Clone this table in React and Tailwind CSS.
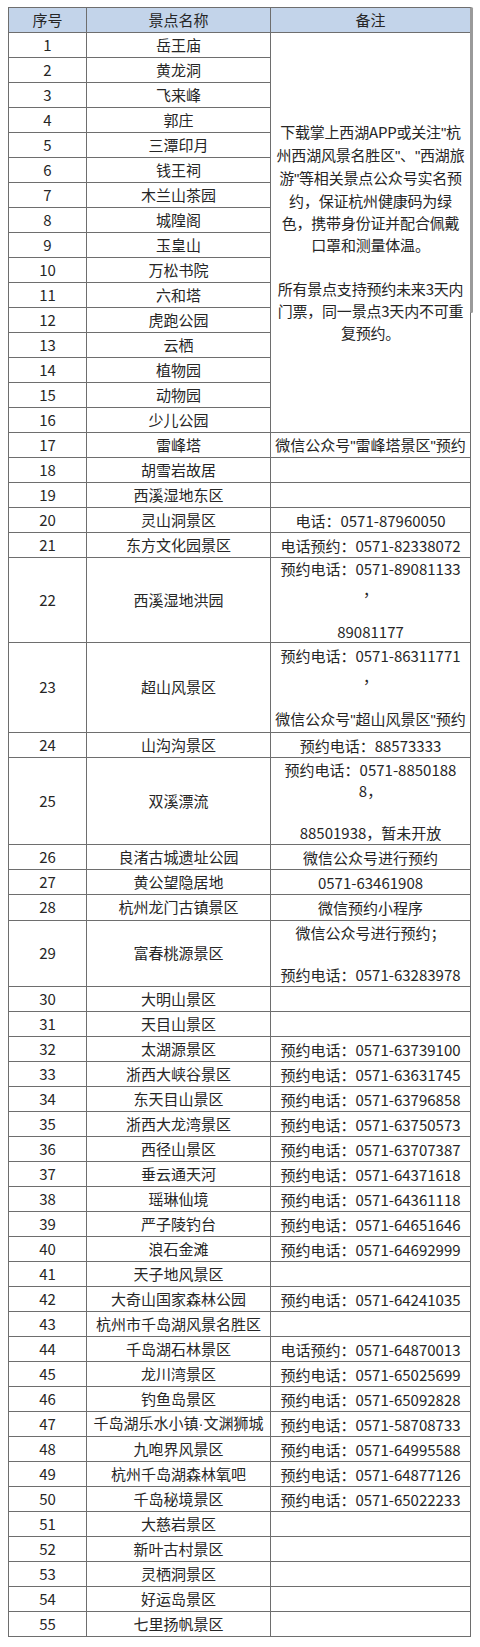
import React from 'react';

const dot = <span style={{ fontFamily: '"Liberation Sans", sans-serif' }}>·</span>;

const spots = [
  '岳王庙', '黄龙洞', '飞来峰', '郭庄', '三潭印月', '钱王祠', '木兰山茶园', '城隍阁',
  '玉皇山', '万松书院', '六和塔', '虎跑公园', '云栖', '植物园', '动物园', '少儿公园',
  '雷峰塔', '胡雪岩故居', '西溪湿地东区', '灵山洞景区', '东方文化园景区', '西溪湿地洪园',
  '超山风景区', '山沟沟景区', '双溪漂流', '良渚古城遗址公园', '黄公望隐居地', '杭州龙门古镇景区',
  '富春桃源景区', '大明山景区', '天目山景区', '太湖源景区', '浙西大峡谷景区', '东天目山景区',
  '浙西大龙湾景区', '西径山景区', '垂云通天河', '瑶琳仙境', '严子陵钓台', '浪石金滩',
  '天子地风景区', '大奇山国家森林公园', '杭州市千岛湖风景名胜区', '千岛湖石林景区', '龙川湾景区',
  '钓鱼岛景区', <>千岛湖乐水小镇{dot}文渊狮城</>, '九咆界风景区', '杭州千岛湖森林氧吧', '千岛秘境景区',
  '大慈岩景区', '新叶古村景区', '灵栖洞景区', '好运岛景区', '七里扬帆景区',
];

const q = <span style={{ fontFamily: '"Liberation Sans", sans-serif' }}>"</span>;

// notes from row 17 on; row heights only where a row is taller than 25px
const notes = {
  17: [<>微信公众号{q}雷峰塔景区{q}预约</>],
  20: ['电话：0571-87960050'],
  21: ['电话预约：0571-82338072'],
  22: ['预约电话：0571-89081133', '，', '', '89081177'],
  23: ['预约电话：0571-86311771', '，', '', <>微信公众号{q}超山风景区{q}预约</>],
  24: ['预约电话：88573333'],
  25: ['预约电话：0571-8850188', '8，', '', '88501938，暂未开放'],
  26: ['微信公众号进行预约'],
  27: ['0571-63461908'],
  28: ['微信预约小程序'],
  29: ['微信公众号进行预约；', '', '预约电话：0571-63283978'],
  32: ['预约电话：0571-63739100'],
  33: ['预约电话：0571-63631745'],
  34: ['预约电话：0571-63796858'],
  35: ['预约电话：0571-63750573'],
  36: ['预约电话：0571-63707387'],
  37: ['预约电话：0571-64371618'],
  38: ['预约电话：0571-64361118'],
  39: ['预约电话：0571-64651646'],
  40: ['预约电话：0571-64692999'],
  42: ['预约电话：0571-64241035'],
  44: ['电话预约：0571-64870013'],
  45: ['预约电话：0571-65025699'],
  46: ['预约电话：0571-65092828'],
  47: ['预约电话：0571-58708733'],
  48: ['预约电话：0571-64995588'],
  49: ['预约电话：0571-64877126'],
  50: ['预约电话：0571-65022233'],
};

const heights = { 22: 'h-[84px]', 23: 'h-[90px]', 25: 'h-[87px]', 28: 'h-[26px]', 29: 'h-[66px]' };

const cell = 'border border-[#6e6e6e] text-center align-middle p-0';

function Note({ lines }) {
  return (
    <div className="leading-[21px]">
      {lines.map((l, i) => (
        <div key={i} className="whitespace-nowrap">{l || '\u00a0'}</div>
      ))}
    </div>
  );
}

export default function App() {
  return (
    <div
      className="relative bg-white min-h-[1647px] pl-2 pt-[7px] text-[15px] text-[#262626]"
      style={{ fontFamily: '"Noto Sans CJK SC", "Noto Sans", sans-serif' }}
    >
      <table className="border-collapse table-fixed w-[462px]">
        <colgroup>
          <col className="w-[78px]" />
          <col className="w-[184px]" />
          <col className="w-[200px]" />
        </colgroup>
        <thead>
          <tr className="h-[25px] bg-[#c3d4ea]">
            <th className={`${cell} font-normal`}>序号</th>
            <th className={`${cell} font-normal`}>景点名称</th>
            <th className={`${cell} font-normal`}>备注</th>
          </tr>
        </thead>
        <tbody>
          {spots.map((name, i) => {
            const n = i + 1;
            return (
              <tr key={n} className={heights[n] || 'h-[25px]'}>
                <td className={cell}>{n}</td>
                <td className={`${cell} whitespace-nowrap`}>{name}</td>
                {n === 1 && (
                  <td rowSpan={16} className={`${cell} whitespace-nowrap leading-[22px] tracking-[-0.2px]`}>
                    下载掌上西湖APP或关注{q}杭<br />
                    州西湖风景名胜区{q}、{q}西湖旅<br />
                    游{q}等相关景点公众号实名预<br />
                    约，保证杭州健康码为绿<br />
                    色，携带身份证并配合佩戴<br />
                    口罩和测量体温。<br />
                    <br />
                    所有景点支持预约未来3天内<br />
                    门票，同一景点3天内不可重<br />
                    复预约。
                  </td>
                )}
                {n > 16 && (
                  <td className={`${cell} overflow-hidden`}>
                    {notes[n] && <Note lines={notes[n]} />}
                  </td>
                )}
              </tr>
            );
          })}
        </tbody>
      </table>
      {/* scroll indicator over the right border */}
      <div className="absolute left-[470px] top-[7px] w-[3px] h-[306px] bg-[#9a9a9a] rounded-full" />
    </div>
  );
}
